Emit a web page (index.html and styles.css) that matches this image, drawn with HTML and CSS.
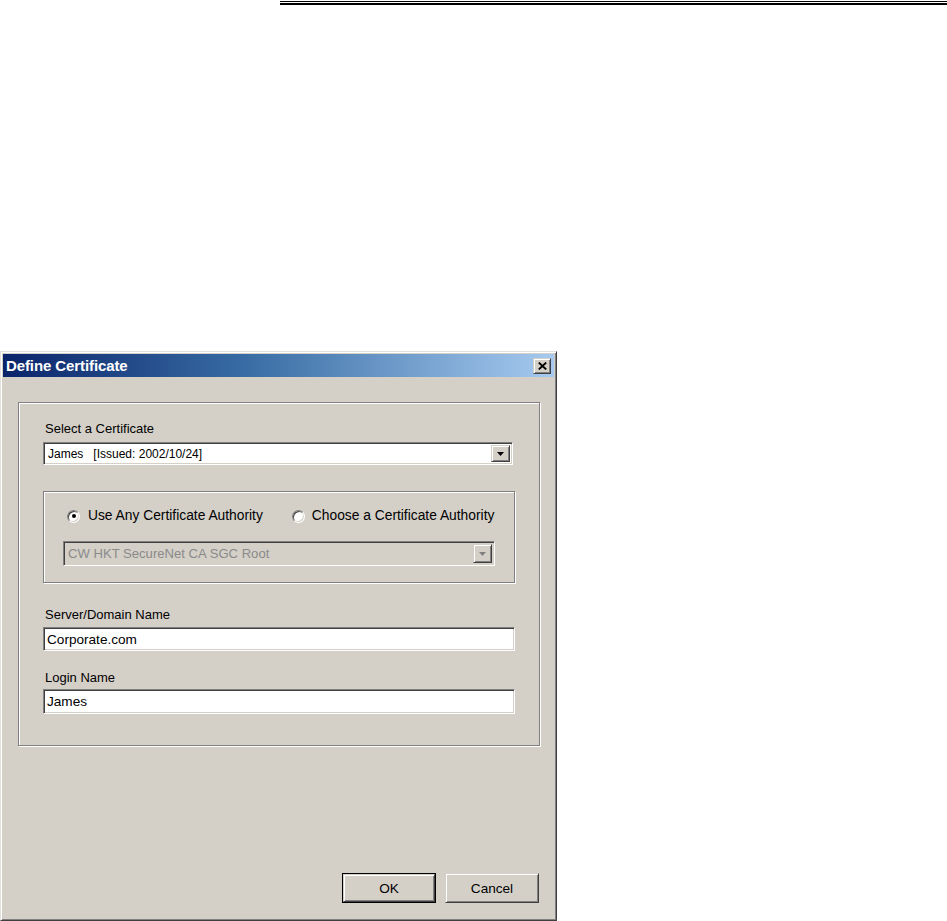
FILE: index.html
```html
<!DOCTYPE html>
<html lang="en">
<head>
<meta charset="utf-8">
<title>Define Certificate</title>
<link rel="stylesheet" href="styles.css">
</head>
<body>
<div class="page">
  <div class="rule"></div>
  <div class="window">
    <div class="titlebar">
      <span class="title">Define Certificate</span>
      <div class="close raised">
        <svg width="9" height="8" viewBox="0 0 9 8"><path d="M0.8 0.6 L8.2 7.4 M8.2 0.6 L0.8 7.4" stroke="#000" stroke-width="1.9" fill="none"/></svg>
      </div>
    </div>
    <div class="body">
      <div class="group">
        <div class="label">Select a Certificate</div>
        <div class="combo sunken">
          <span class="combo-text small">James&nbsp;&nbsp; [Issued: 2002/10/24]</span>
          <span class="drop raised"><svg width="7" height="4" viewBox="0 0 7 4"><polygon points="0,0 7,0 3.5,4" fill="#000"/></svg></span>
        </div>
        <div class="subgroup">
          <div class="radios">
            <div class="radio"><span class="circle checked"></span><span>Use Any Certificate Authority</span></div>
            <div class="radio"><span class="circle"></span><span>Choose a Certificate Authority</span></div>
          </div>
          <div class="combo sunken disabled">
            <span class="combo-text">CW HKT SecureNet CA SGC Root</span>
            <span class="drop raised"><svg width="7" height="4" viewBox="0 0 7 4"><polygon points="0,0 7,0 3.5,4" fill="#808080"/></svg></span>
          </div>
        </div>
        <div class="label label-server">Server/Domain Name</div>
        <div class="field sunken field-server">Corporate.com</div>
        <div class="label label-login">Login Name</div>
        <div class="field sunken field-login">James</div>
      </div>
      <div class="actions">
        <div class="btn default"><span class="btn-inner raised">OK</span></div>
        <div class="btn"><span class="btn-inner raised">Cancel</span></div>
      </div>
    </div>
  </div>
</div>
</body>
</html>
```
FILE: styles.css
```css
html, body {
  margin: 0;
  padding: 0;
  background: #ffffff;
}

body {
  font-family: "Liberation Sans", Arial, sans-serif;
  font-size: 13.6px;
  color: #000;
}

.page {
  width: 947px;
  height: 921px;
  overflow: hidden;
}

.rule {
  margin: 1px 0 0 280px;
  height: 1px;
  border-top: 1px solid #000;
  border-bottom: 2px solid #000;
}

.window {
  margin-top: 346px;
  width: 557px;
  height: 570px;
  box-sizing: border-box;
  background: #d4d0c8;
  border: 1px solid;
  border-color: #e4e1dc #404040 #404040 #e4e1dc;
  box-shadow: inset 1px 1px 0 #ffffff, inset -1px -1px 0 #808080;
  padding: 2px;
  display: flex;
  flex-direction: column;
}

.raised {
  box-sizing: border-box;
  background: #d4d0c8;
  border: 1px solid;
  border-color: #d4d0c8 #404040 #404040 #d4d0c8;
  box-shadow: inset 1px 1px 0 #ffffff, inset -1px -1px 0 #808080;
}

.sunken {
  box-sizing: border-box;
  background: #ffffff;
  border: 1px solid;
  border-color: #808080 #ffffff #ffffff #808080;
  box-shadow: inset 1px 1px 0 #404040, inset -1px -1px 0 #d4d0c8;
}

.titlebar {
  height: 23px;
  flex: none;
  display: flex;
  align-items: center;
  justify-content: space-between;
  background: linear-gradient(to right, #0a246a 0%, #3a6ea5 45%, #a6caf0 100%);
  padding: 0 3px 0 3px;
}

.title {
  color: #ffffff;
  font-weight: bold;
  font-size: 15px;
  line-height: 23px;
  letter-spacing: -0.1px;
}

.close {
  width: 18px;
  height: 16px;
  display: flex;
  align-items: center;
  justify-content: center;
}

.body {
  flex: 1;
  display: flex;
  flex-direction: column;
}

.group {
  margin: 25px 0 0 15px;
  width: 472px;
  padding: 18px 24px 31px 24px;
  border: 1px solid #808080;
  box-shadow: inset 1px 1px 0 #ffffff, 1px 1px 0 #ffffff;
}

.label {
  line-height: 16px;
  height: 16px;
  padding-left: 2px;
  font-size: 13px;
}

.combo {
  margin-top: 5px;
  width: 470px;
  height: 23px;
  display: flex;
  align-items: stretch;
  padding: 2px;
}

.combo-text {
  flex: 1;
  padding-left: 2px;
  display: flex;
  align-items: center;
  white-space: pre;
}

.combo-text.small {
  font-size: 12px;
}

.drop {
  width: 19px;
  flex: none;
  display: flex;
  align-items: center;
  justify-content: center;
}

.subgroup {
  margin-top: 26px;
  height: 92px;
  box-sizing: border-box;
  padding: 16px 19px 16px 19px;
  border: 1px solid #808080;
  box-shadow: inset 1px 1px 0 #ffffff, 1px 1px 0 #ffffff;
}

.radios {
  display: flex;
  gap: 29px;
  padding-left: 4px;
  height: 16px;
  line-height: 16px;
  font-size: 13.8px;
}

.radio {
  display: flex;
  align-items: center;
  gap: 8px;
}

.radio + .radio {
  gap: 7px;
}

.circle {
  width: 13px;
  height: 13px;
  box-sizing: border-box;
  border-radius: 50%;
  background: #ffffff;
  border: 1px solid;
  border-color: #808080 #ffffff #ffffff #808080;
  box-shadow: inset 1px 1px 0 #404040, inset -1px -1px 0 #d4d0c8;
  display: flex;
  align-items: center;
  justify-content: center;
}

.circle.checked::after {
  content: "";
  width: 4px;
  height: 4px;
  border-radius: 50%;
  background: #000;
}

.combo.disabled {
  margin-top: 17px;
  width: 432px;
  height: 25px;
  background: #d4d0c8;
  color: #8a8a8a;
  font-size: 13.1px;
}

.label-server {
  margin-top: 24px;
}

.label-login {
  margin-top: 19px;
}

.field {
  width: 472px;
  display: flex;
  align-items: center;
  padding: 0 3px;
}

.field-server {
  margin-top: 4px;
  height: 24px;
}

.field-login {
  margin-top: 3px;
  height: 25px;
}

.actions {
  margin-top: auto;
  display: flex;
  justify-content: flex-end;
  gap: 9px;
  padding: 0 15px 15px 0;
}

.btn {
  width: 94px;
  height: 30px;
  box-sizing: border-box;
  display: flex;
}

.btn.default {
  border: 1px solid #000;
}

.btn-inner {
  flex: 1;
  display: flex;
  align-items: center;
  justify-content: center;
}
```
